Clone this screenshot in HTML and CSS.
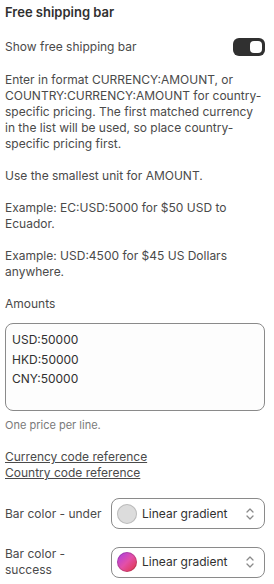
FILE: index.html
```html
<!DOCTYPE html>
<html lang="en">
<head>
    <meta charset="UTF-8">
    <title>Free shipping bar</title>
    <link rel="stylesheet" href="styles.css">
</head>
<body>
    <div class="panel">
        <h2 class="title">Free shipping bar</h2>

        <div class="toggle-row">
            <span>Show free shipping bar</span>
            <span class="toggle"><span class="knob"></span></span>
        </div>

        <p class="info">
            Enter in format CURRENCY:AMOUNT, or COUNTRY:CURRENCY:AMOUNT for country-specific pricing. The first matched currency in the list will be used, so place country-specific pricing first.<br><br>Use the smallest unit for AMOUNT.<br><br>Example: EC:USD:5000 for $50 USD to Ecuador.<br><br>Example: USD:4500 for $45 US Dollars anywhere.
        </p>

        <div class="field">
            <label class="label">Amounts</label>
            <div class="textarea">USD:50000<br>HKD:50000<br>CNY:50000</div>
            <div class="help">One price per line.</div>
        </div>

        <div class="links">
            <a href="#">Currency code reference</a><br>
            <a href="#">Country code reference</a>
        </div>

        <div class="color-row">
            <span class="color-label">Bar color - under</span>
            <div class="select">
                <span class="swatch grey"></span>
                <span class="select-text">Linear gradient</span>
                <svg class="chev" width="10" height="14" viewBox="0 0 10 14"><path d="M2 5 L5 2 L8 5 M2 9 L5 12 L8 9" fill="none" stroke="#8a8a8a" stroke-width="1.3" stroke-linecap="round" stroke-linejoin="round"/></svg>
            </div>
        </div>

        <div class="color-row">
            <span class="color-label">Bar color - success</span>
            <div class="select">
                <span class="swatch pink"></span>
                <span class="select-text">Linear gradient</span>
                <svg class="chev" width="10" height="14" viewBox="0 0 10 14"><path d="M2 5 L5 2 L8 5 M2 9 L5 12 L8 9" fill="none" stroke="#8a8a8a" stroke-width="1.3" stroke-linecap="round" stroke-linejoin="round"/></svg>
            </div>
        </div>
    </div>
</body>
</html>
```

FILE: styles.css
```css
body{
    margin: 0;
    background: #fff;
    font-family: Inter, "Noto Sans", sans-serif;
    color: #4a4a4a;
}
.panel{
    padding: 2px 9px 0 5px;
    font-size: 12px;
    line-height: 16px;
}
.title{
    margin: 0;
    font-size: 13px;
    font-weight: 600;
    line-height: 20px;
    color: #303030;
}
.toggle-row{
    margin-top: 15px;
    display: flex;
    justify-content: space-between;
    align-items: center;
    height: 20px;
}
.toggle{
    width: 32px;
    height: 18px;
    border-radius: 6px;
    background: #303030;
    display: flex;
    align-items: center;
    justify-content: flex-end;
    padding-right: 3px;
    box-sizing: border-box;
}
.knob{
    width: 12px;
    height: 12px;
    border-radius: 4px;
    background: #fff;
}
.info{
    margin: 15px 0 0;
}
.field{
    margin-top: 16px;
}
.label{
    display: block;
}
.textarea{
    margin-top: 11px;
    height: 88px;
    border: 1px solid #8a8a8a;
    border-radius: 8px;
    padding: 6px 6px 0;
    box-sizing: border-box;
    line-height: 19.5px;
    font-size: 12px;
    color: #303030;
    background: #fdfdfd;
}
.help{
    margin-top: 6px;
    font-size: 11px;
    color: #7a7a7a;
}
.links{
    margin-top: 16px;
}
.links a{
    color: #4a4a4a;
    text-decoration: underline;
}
.color-row{
    display: flex;
    align-items: center;
    gap: 6px;
    margin-top: 17px;
}
.color-label{
    width: 100px;
    flex: none;
}
.select{
    flex: 1;
    height: 31px;
    border: 1px solid #8a8a8a;
    border-radius: 8px;
    display: flex;
    align-items: center;
    padding: 0 9px 0 5px;
    box-sizing: border-box;
    font-size: 12px;
    color: #303030;
}
.swatch{
    width: 20px;
    height: 20px;
    border-radius: 50%;
    flex: none;
    margin-right: 5px;
    box-shadow: inset 0 0 0 1px rgba(0,0,0,.15);
}
.swatch.grey{
    background: #dcdcdc;
}
.swatch.pink{
    background: linear-gradient(135deg, #a63ee8 0%, #e34fa8 50%, #e0333c 100%);
}
.select-text{
    flex: 1;
}
.chev{
    flex: none;
}
```
